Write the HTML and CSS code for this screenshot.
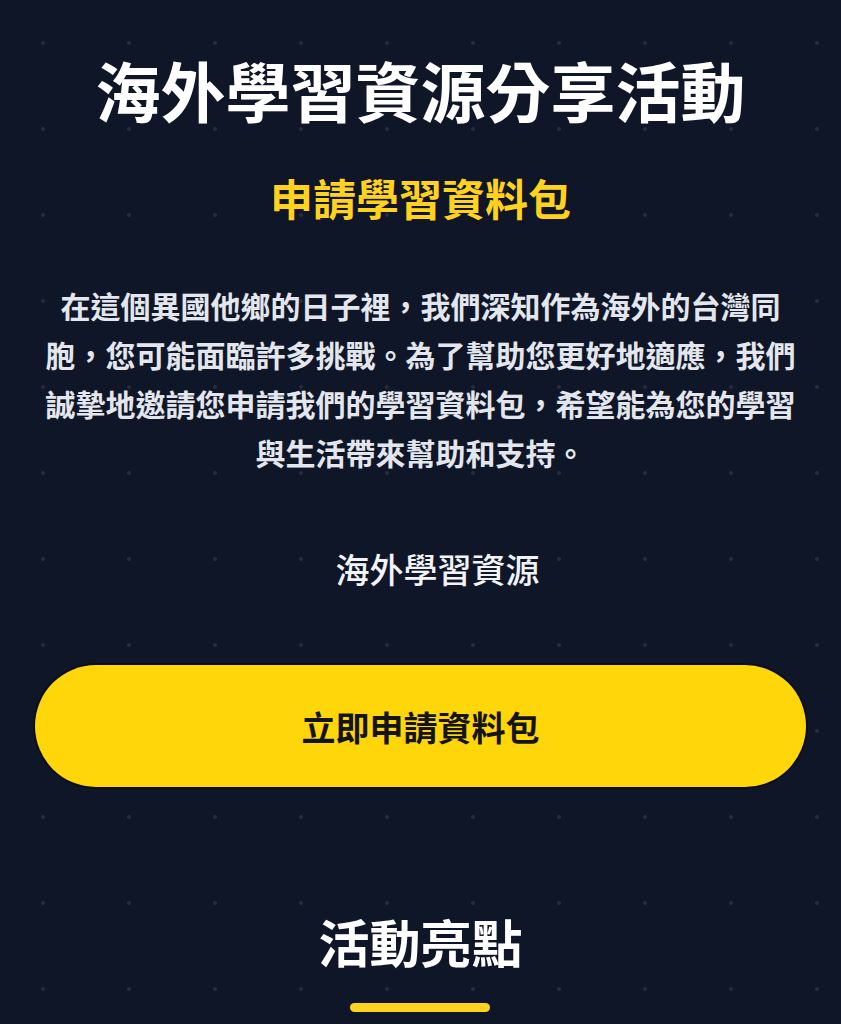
FILE: index.html
```html
<!DOCTYPE html>
<html lang="zh-Hant">
<head>
<meta charset="utf-8">
<title>海外學習資源分享活動</title>
<link rel="stylesheet" href="styles.css">
</head>
<body>
<main class="page">
  <section class="hero">
    <h1 class="hero-title">海外學習資源分享活動</h1>
    <h2 class="hero-subtitle">申請學習資料包</h2>
    <p class="hero-text">在這個異國他鄉的日子裡，我們深知作為海外的台灣同胞，您可能面臨許多挑戰。為了幫助您更好地適應，我們誠摯地邀請您申請我們的學習資料包，希望能為您的學習與生活帶來幫助和支持。</p>
    <div class="hero-label">海外學習資源</div>
    <a class="cta" href="#">立即申請資料包</a>
  </section>
  <section class="highlights">
    <h2 class="section-title">活動亮點</h2>
    <div class="section-bar"></div>
  </section>
</main>
</body>
</html>
```

FILE: styles.css
```css
html, body {
  margin: 0;
  padding: 0;
}
body {
  background-color: #0f1628;
  background-image: radial-gradient(circle, rgba(255,255,255,0.09) 1.6px, transparent 2.2px);
  background-size: 86px 86px;
  background-position: 0 0;
  font-family: "Noto Sans CJK TC", "Noto Sans", sans-serif;
  color: #ffffff;
  min-height: 1024px;
}
.page {
  display: flex;
  flex-direction: column;
  align-items: center;
  padding: 0 33px;
}
.hero {
  display: flex;
  flex-direction: column;
  align-items: center;
  width: 100%;
  padding-top: 51px;
}
.hero-title {
  margin: 0;
  font-size: 65px;
  line-height: 77px;
  font-weight: 700;
  color: #ffffff;
  text-align: center;
}
.hero-subtitle {
  margin: 44px 0 0;
  font-size: 43px;
  line-height: 51px;
  font-weight: 700;
  color: #ffd21f;
  text-align: center;
}
.hero-text {
  margin: 58px 0 0;
  font-size: 30px;
  line-height: 49px;
  font-weight: 700;
  color: #e3e6ec;
  text-align: center;
}
.hero-label {
  margin-top: 72px;
  padding-left: 34px;
  font-size: 34px;
  line-height: 40px;
  font-weight: 500;
  color: #f1f3f6;
}
.cta {
  margin-top: 76px;
  display: flex;
  align-items: center;
  justify-content: center;
  width: 771px;
  height: 122px;
  box-sizing: border-box;
  border-radius: 61px;
  background: #ffd60a;
  color: #141414;
  font-size: 34px;
  font-weight: 700;
  text-decoration: none;
  box-shadow: 0 0 0 2px rgba(0,0,0,0.35);
}
.highlights {
  display: flex;
  flex-direction: column;
  align-items: center;
  padding-top: 124px;
}
.section-title {
  margin: 0;
  font-size: 51px;
  line-height: 60px;
  font-weight: 700;
  color: #ffffff;
}
.section-bar {
  margin-top: 32px;
  width: 140px;
  height: 9px;
  border-radius: 5px;
  background: #ffd21f;
}
```
